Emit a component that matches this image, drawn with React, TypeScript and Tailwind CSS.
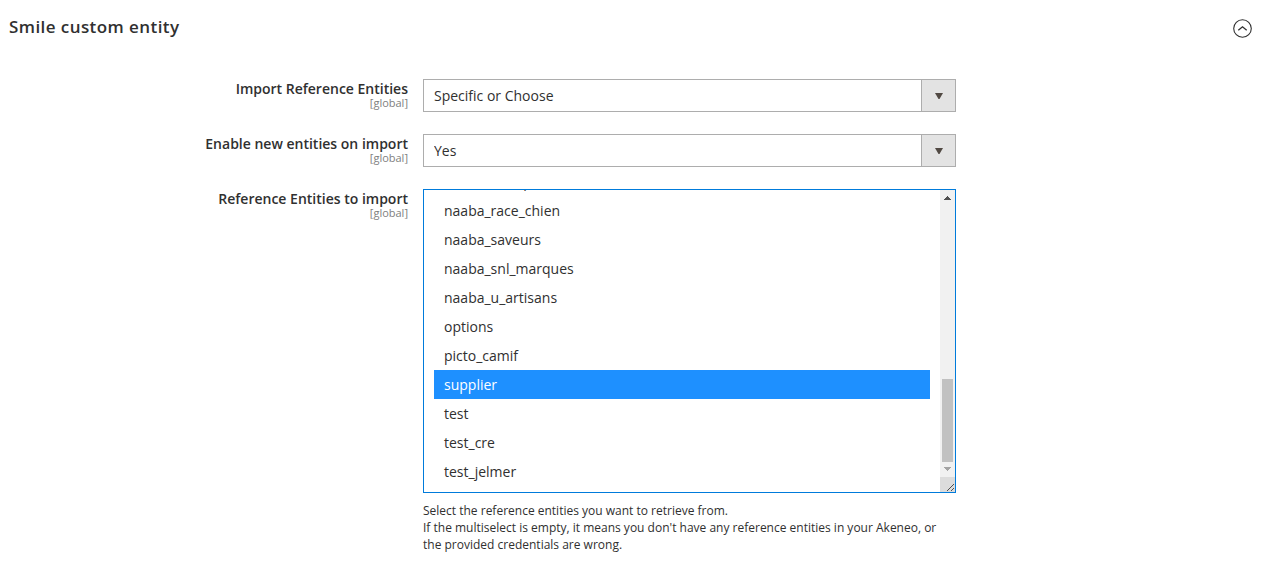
import { useCallback, useLayoutEffect, useRef, useState, type ReactNode } from "react";

const entities = [
  "asset", "brand", "category", "city", "collection", "color", "country", "designer", "fabric",
  "naaba_age", "naaba_besoins", "naaba_chat", "naaba_chien", "naaba_couleurs", "naaba_format",
  "naaba_gammes", "naaba_genre", "naaba_ingredients", "naaba_labels", "naaba_ligne", "naaba_matieres",
  "naaba_liste_parfums", "naaba_race_chien", "naaba_saveurs", "naaba_snl_marques", "naaba_u_artisans",
  "options", "picto_camif", "supplier", "test", "test_cre", "test_jelmer",
];

function Field({ id, label, children }: { id: string; label: string; children: ReactNode }) {
  return (
    <div className="grid grid-cols-[423fr_533fr_308fr]">
      <label htmlFor={id} className="flex flex-col pr-[15px] text-right">
        <span className="text-sm leading-[19px] font-semibold">{label}</span>
        <span className="text-[11px] leading-[10px] text-[#808080]">[global]</span>
      </label>
      <div>{children}</div>
    </div>
  );
}

function Dropdown({ id, value, options }: { id: string; value: string; options: string[] }) {
  return (
    <div className="relative">
      <select
        id={id}
        defaultValue={value}
        className="block h-[33px] w-full appearance-none rounded-none border border-[#adadad] bg-white pr-11 pl-2.5 text-sm outline-none focus:border-[#007bdb]"
      >
        {options.map((o) => (
          <option key={o}>{o}</option>
        ))}
      </select>
      <span className="pointer-events-none absolute inset-y-0 right-0 flex w-[35px] items-center justify-center border border-[#adadad] bg-[#e3e3e3]">
        <svg width="8" height="6" viewBox="0 0 8 6" aria-hidden="true">
          <path d="M0 0h8L4.5 6h-1z" fill="#514943" />
        </svg>
      </span>
    </div>
  );
}

function MultiSelect({ id, describedBy }: { id: string; describedBy: string }) {
  const [selected, setSelected] = useState(["supplier"]);
  const [thumb, setThumb] = useState({ top: 0, height: 0 });
  const list = useRef<HTMLSelectElement>(null);

  const measure = useCallback(() => {
    const el = list.current;
    if (!el) return;
    setThumb({
      top: (el.scrollTop / el.scrollHeight) * 100,
      height: (el.clientHeight / el.scrollHeight) * 100,
    });
  }, []);

  useLayoutEffect(() => {
    if (list.current) list.current.scrollTop = list.current.scrollHeight;
    measure();
  }, [measure]);

  return (
    <div className="relative">
      <select
        id={id}
        ref={list}
        multiple
        size={10}
        value={selected}
        aria-describedby={describedBy}
        onScroll={measure}
        onChange={(e) => setSelected(Array.from(e.target.selectedOptions, (o) => o.value))}
        className="block h-[304px] w-full resize-y overflow-y-scroll rounded-none border border-[#007bdb] bg-white py-1.5 pr-[25px] pl-2.5 text-sm outline-none [scrollbar-width:none]"
      >
        {entities.map((name) => (
          <option
            key={name}
            className="px-2.5 py-[5px] leading-[19px] checked:bg-[#1e90ff] checked:bg-[linear-gradient(#1e90ff,#1e90ff)] checked:text-white"
          >
            {name}
          </option>
        ))}
      </select>
      <div
        aria-hidden="true"
        className="pointer-events-none absolute inset-y-px right-px flex w-[15px] flex-col bg-[#f1f1f1]"
      >
        <svg width="15" height="15" viewBox="0 0 15 15" shapeRendering="crispEdges">
          <path d="M7 6h1v1h1v1h1v1h1v1H4V9h1V8h1V7h1z" fill="#505050" />
        </svg>
        <div className="relative flex-1">
          <div
            className="absolute inset-x-0.5 bg-[#c1c1c1]"
            style={{ top: `${thumb.top}%`, height: `${thumb.height}%` }}
          />
        </div>
        <svg width="15" height="15" viewBox="0 0 15 15" shapeRendering="crispEdges">
          <path d="M4 5h7v1h-1v1H9v1H8v1H7V8H6V7H5V6H4z" fill="#a3a3a3" />
        </svg>
        <svg width="15" height="15" viewBox="0 0 15 15" className="bg-[#dcdcdc]">
          <path d="M7 14l7-7M11 14l3-3" stroke="#505050" fill="none" />
        </svg>
      </div>
    </div>
  );
}

export default function App() {
  const [open, setOpen] = useState(true);

  return (
    <main className="bg-white pb-6 font-['Open_Sans',sans-serif] text-[#303030]">
      <header className="flex items-start justify-between pt-[15px] pr-3 pl-[9px]">
        <h2 className="text-[17px] leading-6 font-semibold tracking-wide">Smile custom entity</h2>
        <button
          type="button"
          aria-label="Toggle section"
          aria-expanded={open}
          onClick={() => setOpen(!open)}
          className="pt-1"
        >
          <svg width="19" height="19" viewBox="0 0 19 19" fill="none" stroke="#303030" aria-hidden="true">
            <circle cx="9.5" cy="9.5" r="8.8" strokeWidth="1.1" />
            <path d="M5.3 11.3 9.5 7.8l4.2 3.5" strokeWidth="1.3" />
          </svg>
        </button>
      </header>
      {open && (
        <div className="flex flex-col gap-[22px] pt-10">
          <Field id="mode" label="Import Reference Entities">
            <Dropdown id="mode" value="Specific or Choose" options={["All", "Specific or Choose"]} />
          </Field>
          <Field id="enable" label="Enable new entities on import">
            <Dropdown id="enable" value="Yes" options={["Yes", "No"]} />
          </Field>
          <Field id="entities" label="Reference Entities to import">
            <MultiSelect id="entities" describedBy="entities-note" />
            <p id="entities-note" className="pt-[9px] text-xs leading-[17px]">
              Select the reference entities you want to retrieve from.
              <br />
              If the multiselect is empty, it means you don't have any reference entities in your Akeneo, or the
              provided credentials are wrong.
            </p>
          </Field>
        </div>
      )}
    </main>
  );
}
